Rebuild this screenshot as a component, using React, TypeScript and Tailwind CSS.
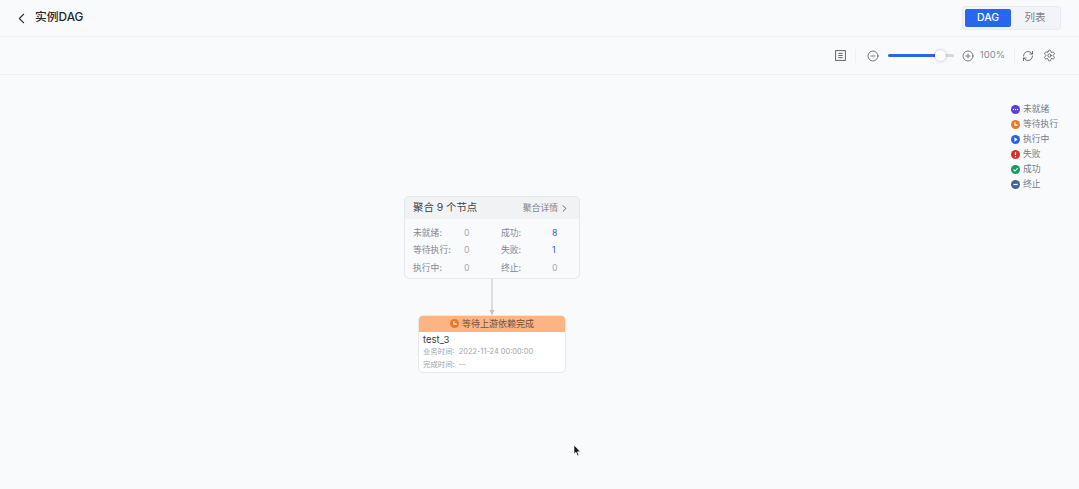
import { ChevronLeft, ChevronRight, CircleMinus, CirclePlus, RefreshCw, Settings } from "lucide-react";

const font = { fontFamily: '"Inter", "Noto Sans CJK SC", sans-serif' };

function StatusDot({ color, kind }: { color: string; kind: string }) {
  return (
    <svg width="9" height="9" viewBox="0 0 10 10" className="shrink-0">
      <circle cx="5" cy="5" r="5" fill={color} />
      {kind === "dots" && (
        <g fill="#fff">
          <circle cx="2.8" cy="5" r=".7" />
          <circle cx="5" cy="5" r=".7" />
          <circle cx="7.2" cy="5" r=".7" />
        </g>
      )}
      {kind === "clock" && <path d="M4.4 2.4V5.6H7.4" fill="none" stroke="#fff" strokeWidth="1.3" />}
      {kind === "play" && <path d="M3.8 2.6L7.4 5L3.8 7.4Z" fill="#fff" />}
      {kind === "alert" && <path d="M5 2.2V5.8M5 6.8V8" fill="none" stroke="#fff" strokeWidth="1.3" />}
      {kind === "check" && <path d="M2.8 5L4.5 6.7L7.4 3.6" fill="none" stroke="#fff" strokeWidth="1.2" />}
      {kind === "stop" && <path d="M2.6 5H7.4" fill="none" stroke="#fff" strokeWidth="1.4" />}
    </svg>
  );
}

const legend = [
  { label: "未就绪", color: "#5b3fd6", kind: "dots" },
  { label: "等待执行", color: "#e8792b", kind: "clock" },
  { label: "执行中", color: "#2563eb", kind: "play" },
  { label: "失败", color: "#d32f2f", kind: "alert" },
  { label: "成功", color: "#0f9d58", kind: "check" },
  { label: "终止", color: "#44609c", kind: "stop" },
];

const stats = [
  ["未就绪:", "0", "成功:", "8"],
  ["等待执行:", "0", "失败:", "1"],
  ["执行中:", "0", "终止:", "0"],
];

function StatValue({ value }: { value: string }) {
  return <span className={value === "0" ? "text-[#a8abb2]" : "text-[#2f62d9]"}>{value}</span>;
}

export default function App() {
  return (
    <div style={font} className="flex h-[489px] w-[1079px] flex-col overflow-hidden bg-[#f9fafc] text-[#333]">
      {/* Header */}
      <div className="flex h-[37px] shrink-0 items-center justify-between border-b border-[#f0f1f4] pl-[13px] pr-[18px]">
        <div className="flex items-center gap-[5px]">
          <ChevronLeft size={17} strokeWidth={1.5} className="text-[#333]" />
          <span className="text-[11.8px] font-medium text-[#26282c]">实例DAG</span>
        </div>
        <div className="flex h-[24px] w-[99px] items-center rounded-[3px] border border-[#e8eaee] bg-[#f3f4f7] p-[2px]">
          <div className="flex h-[18px] w-[46px] items-center justify-center rounded-[2px] bg-[#2866ee] text-[10.5px] font-medium text-white">DAG</div>
          <div className="flex-1 pl-[1px] text-center text-[10.5px] text-[#7d8087]">列表</div>
        </div>
      </div>

      {/* Toolbar */}
      <div className="flex h-[38px] shrink-0 items-center justify-end border-b border-[#f0f1f4] pr-[23px] text-[#444]">
        <svg width="11" height="11" viewBox="0 0 11 11" fill="none" stroke="#666" strokeWidth="1">
          <rect x=".6" y=".6" width="9.8" height="9.8" />
          <path d="M3.3 3.4H7.7M3.3 5.5H7.7M3.3 7.6H7.7" />
        </svg>
        <div className="ml-[9px] mr-[11px] h-[14px] w-px bg-[#eeeff2]" />
        <CircleMinus size={12} strokeWidth={1.4} />
        <div className="relative ml-[9px] mr-[8px] h-[3px] w-[66px] rounded-full bg-[#d6d8dc]">
          <div className="h-full w-[52px] rounded-full bg-[#2866ee]" />
          <div className="absolute left-[47px] top-[-4px] h-[11px] w-[11px] rounded-full bg-white shadow-[0_0_3px_rgba(0,0,0,0.3)]" />
        </div>
        <CirclePlus size={12} strokeWidth={1.4} />
        <span className="ml-[6px] text-[9.5px] text-[#888b91]">100%</span>
        <div className="ml-[9px] mr-[7px] h-[14px] w-px bg-[#eeeff2]" />
        <RefreshCw size={12} strokeWidth={1.5} />
        <Settings size={13} strokeWidth={1.4} className="ml-[9px]" />
      </div>

      {/* Canvas */}
      <div className="relative flex-1">
        {/* Legend */}
        <div className="absolute left-[1011px] top-[28px] flex flex-col gap-[2px]">
          {legend.map((item) => (
            <div key={item.label} className="flex h-[13px] items-center gap-[3px] text-[8.8px] leading-none text-[#777a80]">
              <StatusDot color={item.color} kind={item.kind} />
              <span>{item.label}</span>
            </div>
          ))}
        </div>

        {/* Aggregate node */}
        <div className="absolute left-[404px] top-[121px] h-[83px] w-[176px] overflow-hidden rounded-[5px] border border-[#e5e7eb] bg-[#f9fafc]">
          <div className="flex h-[22px] items-center justify-between bg-[#f1f2f4] pl-[8px] pr-[9px]">
            <span className="text-[10.4px] text-[#3f4248]">聚合 9 个节点</span>
            <span className="flex items-center gap-[1px] text-[8.8px] text-[#85888e]">
              聚合详情
              <ChevronRight size={11} strokeWidth={1.8} className="text-[#444]" />
            </span>
          </div>
          <div className="flex flex-col gap-[4px] pl-[8px] pt-[6.5px] text-[8.8px] leading-[13.5px] text-[#85888e]">
            {stats.map((row) => (
              <div key={row[0]} className="flex">
                <span className="w-[51px]">{row[0]}</span>
                <span className="w-[37px] text-[#a8abb2]">{row[1]}</span>
                <span className="w-[51px]">{row[2]}</span>
                <StatValue value={row[3]} />
              </div>
            ))}
          </div>
        </div>

        {/* Edge between the nodes */}
        <svg width="8" height="38" viewBox="0 0 8 38" className="absolute left-[488px] top-[204px]">
          <path d="M4 0V33" stroke="#c9cbd0" strokeWidth="1.2" />
          <path d="M1.5 31H6.5L4 36.5Z" fill="#c0c2c7" />
        </svg>

        {/* Task node */}
        <div className="absolute left-[418px] top-[240px] h-[58px] w-[148px] overflow-hidden rounded-[5px] border border-[#e6e8ec] bg-white">
          <div className="mt-[-1px] flex h-[17px] items-center justify-center gap-[3px] bg-[#fdb483] text-[9px] text-[#6e5140]">
            <StatusDot color="#e8792b" kind="clock" />
            <span>等待上游依赖完成</span>
          </div>
          <div className="px-[4px] pt-[1px]">
            <div className="text-[9.5px] leading-[13px] text-[#3a3c41]">test_3</div>
            <div className="text-[7.4px] leading-[12px] text-[#a0a3a9]">业务时间:&nbsp; 2022-11-24 00:00:00</div>
            <div className="mt-[1px] text-[7.4px] leading-[12px] text-[#a0a3a9]">完成时间:&nbsp; --</div>
          </div>
        </div>

        {/* Mouse cursor */}
        <svg width="9" height="13" viewBox="0 0 9 13" className="absolute left-[573px] top-[369px]">
          <path d="M1 1V10L3 8.2L4.6 12L6 11.4L4.5 7.8H7.4Z" fill="#111" stroke="#fff" strokeWidth=".7" />
        </svg>
      </div>
    </div>
  );
}
